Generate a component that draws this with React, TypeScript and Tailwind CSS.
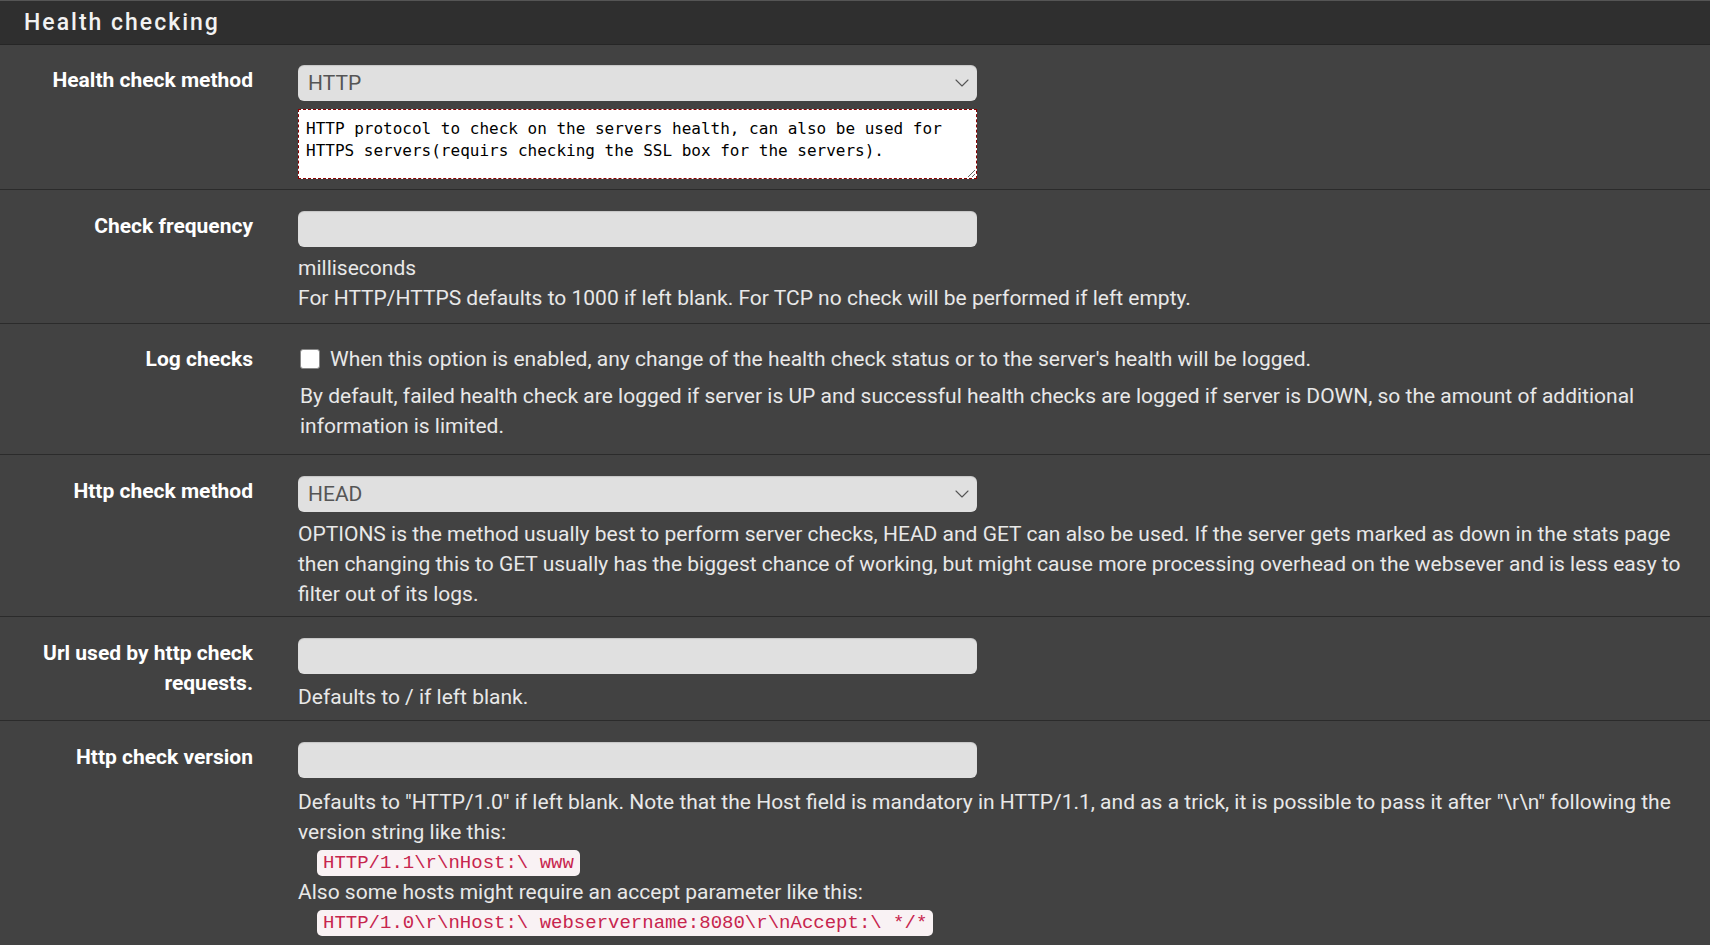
import React from "react";
import { ChevronDown } from "lucide-react";

function Row({ label, children, className = "" }: { label: React.ReactNode; children: React.ReactNode; className?: string }) {
	return (
		<div className={`flex border-b border-[#2b2b2b] ${className}`}>
			<div className="w-[253px] shrink-0 text-right font-bold text-white">{label}</div>
			<div className="ml-[45px] flex-1 pr-[20px]">{children}</div>
		</div>
	);
}

function Select({ value }: { value: string }) {
	return (
		<div className="relative flex h-[36px] w-[679px] items-center rounded-[6px] bg-[#e0e0e0] pl-[10px] text-[#555] shadow-[inset_0_1px_1px_rgba(0,0,0,0.12)]">
			<span>{value}</span>
			<ChevronDown className="absolute right-[3px] top-[6px] text-[#555]" size={24} strokeWidth={1.1} />
		</div>
	);
}

function Input() {
	return <div className="h-[36px] w-[679px] rounded-[6px] bg-[#e0e0e0] shadow-[inset_0_1px_1px_rgba(0,0,0,0.12)]" />;
}

function Code({ children }: { children: React.ReactNode }) {
	return (
		<div className="pl-[19px] leading-[28px]">
			<code className="rounded-[5px] bg-[#f9f2f4] px-[6px] py-[2px] font-['Liberation_Mono',monospace] text-[19px] text-[#c7254e]">{children}</code>
		</div>
	);
}

export default function App() {
	return (
		<div className="min-h-screen bg-[#424242] font-['Roboto',sans-serif] text-[21px] leading-[30px] text-[#e8e8e8]">
			<div className="flex h-[45px] items-center border-t border-b border-t-[#555] border-b-[#262626] bg-[#2f2f2f] pl-[24px] text-[23px] font-medium tracking-[2px] text-[#f2f2f2]">
				Health checking
			</div>

			{/* health check method */}
			<Row label="Health check method" className="pt-[20px] pb-[10px]">
				<Select value="HTTP" />
				<textarea
					readOnly
					defaultValue="HTTP protocol to check on the servers health, can also be used for HTTPS servers(requirs checking the SSL box for the servers)."
					className="mt-[8px] block h-[70px] w-[679px] resize-y border border-dashed border-[#8b0000] bg-white px-[7px] py-[8px] font-['DejaVu_Sans_Mono',monospace] text-[16px] leading-[21.5px] text-black outline-none"
				/>
			</Row>

			<Row label="Check frequency" className="pt-[21px] pb-[10px]">
				<Input />
				<div className="mt-[6px]">milliseconds</div>
				<div>For HTTP/HTTPS defaults to 1000 if left blank. For TCP no check will be performed if left empty.</div>
			</Row>

			<Row label="Log checks" className="pt-[20px] pb-[13px]">
				<label className="flex items-center">
					<span className="ml-[2px] mr-[10px] h-[20px] w-[20px] rounded-[3px] border border-[#888] bg-white" />
					When this option is enabled, any change of the health check status or to the server's health will be logged.
				</label>
				<div className="mt-[7px] pl-[2px]">
					By default, failed health check are logged if server is UP and successful health checks are logged if server is DOWN, so the amount of additional information is limited.
				</div>
			</Row>

			<Row label="Http check method" className="pt-[21px] pb-[7px]">
				<Select value="HEAD" />
				<div className="mt-[7px]">
					OPTIONS is the method usually best to perform server checks, HEAD and GET can also be used. If the server gets marked as down in the stats page then changing this to GET usually has the biggest chance of working, but might cause more processing overhead on the websever and is less easy to filter out of its logs.
				</div>
			</Row>

			<Row
				label={
					<>
						Url used by http check
						<br />
						requests.
					</>
				}
				className="pt-[21px] pb-[8px]"
			>
				<Input />
				<div className="mt-[8px]">Defaults to / if left blank.</div>
			</Row>

			<Row label="Http check version" className="pt-[21px] pb-[8px] border-b-0">
				<Input />
				<div className="mt-[9px]">
					Defaults to "HTTP/1.0" if left blank. Note that the Host field is mandatory in HTTP/1.1, and as a trick, it is possible to pass it after "\r\n" following the version string like this:
				</div>
				<Code>HTTP/1.1\r\nHost:\ www</Code>
				<div>Also some hosts might require an accept parameter like this:</div>
				<Code>HTTP/1.0\r\nHost:\ webservername:8080\r\nAccept:\ */*</Code>
			</Row>
		</div>
	);
}
